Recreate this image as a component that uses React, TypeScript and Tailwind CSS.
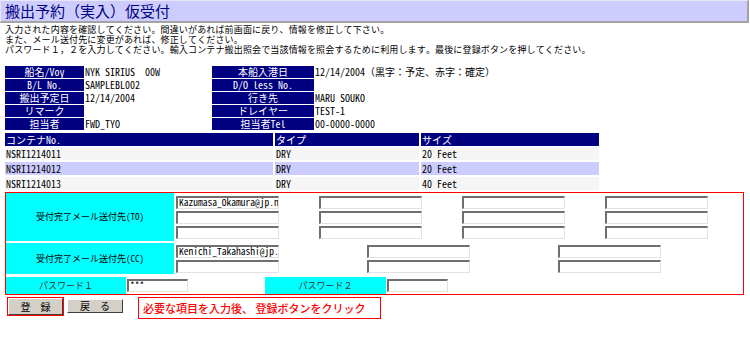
import { Fragment } from 'react';

const mono = "font-['Noto_Sans_Mono_CJK_JP','Noto_Sans_CJK_JP',monospace]";

const infoRows: [string, string, string, string][] = [
  ['船名/Voy', 'NYK SIRIUS  00W', '本船入港日', '12/14/2004（黒字：予定、赤字：確定）'],
  ['B/L No.', 'SAMPLEBL002', 'D/O less No.', ''],
  ['搬出予定日', '12/14/2004', '行き先', 'MARU SOUKO'],
  ['リマーク', '', 'ドレイヤー', 'TEST-1'],
  ['担当者', 'FWD_TYO', '担当者Tel', '00-0000-0000'],
];

const containers = [
  { no: 'NSRI1214011', type: 'DRY', size: '20 Feet' },
  { no: 'NSRI1214012', type: 'DRY', size: '20 Feet' },
  { no: 'NSRI1214013', type: 'DRY', size: '40 Feet' },
];

// メール欄（TO: 4列x3段, CC: 3列x2段）
const toCols = [['Kazumasa_Okamura@jp.n', '', ''], ['', '', ''], ['', '', ''], ['', '', '']];
const ccCols = [['Kenichi_Takahashi@jp.', ''], ['', ''], ['', '']];

function Field({ value, w = 'w-[103px]' }: { value: string; w?: string }) {
  return (
    <div
      className={`${w} h-[13px] bg-white pl-[1px] text-[9.5px] leading-[9px] text-black overflow-hidden whitespace-nowrap border-t-2 border-l-2 border-b border-r border-t-[#6f6f6f] border-l-[#6f6f6f] border-b-[#e2e2e2] border-r-[#e2e2e2] ${mono}`}
    >
      {value}
    </div>
  );
}

const btn =
  'bg-[#d4d0c8] border border-t-white border-l-white border-b-[#404040] border-r-[#404040] flex items-center justify-center leading-none';

export default function App() {
  return (
    <div className={`w-[750px] h-[342px] bg-white text-black overflow-hidden ${mono}`}>
      {/* Title bar */}
      <div className="w-[749px] h-[23px] bg-[#ccccff] border-t border-l border-t-[#e6e6f5] border-l-[#e6e6f5] border-b-2 border-r-2 border-b-[#a4a4a4] border-r-[#a4a4a4] pl-[4px] flex items-center text-[15px] text-[#000080] font-['Noto_Sans_CJK_JP',sans-serif]">
        搬出予約（実入）仮受付
      </div>

      {/* Notes */}
      <div className="pl-[5px] pt-[2px] text-[9px] leading-[10px] tracking-[0.15px]">
        <p>入力された内容を確認してください。間違いがあれば前画面に戻り、情報を修正して下さい。</p>
        <p>また、メール送付先に変更があれば、修正してください。</p>
        <p>パスワード１，２を入力してください。輸入コンテナ搬出照会で当該情報を照会するために利用します。最後に登録ボタンを押してください。</p>
      </div>

      {/* Booking info */}
      <div className="mt-[11px] ml-[5px] grid grid-cols-[79px_126px_102px_1fr] gap-[1px] text-[10px] leading-[12px]">
        {infoRows.map((r) => (
          <Fragment key={r[0]}>
            <div className="h-[12px] bg-[#000080] text-white text-center">{r[0]}</div>
            <div className="h-[12px] whitespace-pre">{r[1]}</div>
            <div className="h-[12px] bg-[#000080] text-white text-center">{r[2]}</div>
            <div className="h-[12px] whitespace-pre">{r[3]}</div>
          </Fragment>
        ))}
      </div>

      {/* Containers */}
      <div className="mt-[3px] ml-[5px] w-[592px] text-[10px] leading-[13px]">
        <div className="grid grid-cols-[268px_144px_178px] gap-x-[2px] h-[13px] text-white">
          <div className="bg-[#000080] pl-[1px]">コンテナNo.</div>
          <div className="bg-[#000080] pl-[1px]">タイプ</div>
          <div className="bg-[#000080] pl-[1px]">サイズ</div>
        </div>
        <div className="mt-[1px] flex flex-col gap-[2px]">
          {containers.map((c, i) => {
            const bg = i === 1 ? 'bg-[#ccccff]' : 'bg-[#f5f5f5]';
            return (
              <div key={c.no} className="grid grid-cols-[268px_144px_178px] gap-x-[2px] h-[13px]">
                <div className={`${bg} pl-[1px]`}>{c.no}</div>
                <div className={`${bg} pl-[1px]`}>{c.type}</div>
                <div className={`${bg} pl-[1px]`}>{c.size}</div>
              </div>
            );
          })}
        </div>
      </div>

      {/* Mail / password form */}
      <div className="mt-[2px] ml-[5px] w-[739px] border border-[#ff0000] text-[9px] leading-[10px]">
        <div className="flex h-[48px]">
          <div className="w-[168px] bg-[#00ffff] flex items-center justify-center">受付完了メール送付先(TO)</div>
          <div className="pl-[2px] pt-[3px] flex gap-[40px]">
            {toCols.map((col, i) => (
              <div key={i} className="flex flex-col gap-[2px]">
                {col.map((v, j) => (
                  <Field key={j} value={v} />
                ))}
              </div>
            ))}
          </div>
        </div>
        <div className="mt-[2px] flex h-[31px]">
          <div className="w-[168px] bg-[#00ffff] flex items-center justify-center">受付完了メール送付先(CC)</div>
          <div className="pl-[2px] pt-[2px] flex gap-[88px]">
            {ccCols.map((col, i) => (
              <div key={i} className="flex flex-col gap-[2px]">
                {col.map((v, j) => (
                  <Field key={j} value={v} />
                ))}
              </div>
            ))}
          </div>
        </div>
        <div className="mt-[3px] flex h-[17px] items-start">
          <div className="w-[120px] h-[17px] bg-[#00ffff] flex items-center justify-center text-[#333]">パスワード１</div>
          <div className="ml-[1px] pt-[2px]">
            <Field value="***" w="w-[61px]" />
          </div>
          <div className="ml-[77px] w-[121px] h-[17px] bg-[#00ffff] flex items-center justify-center text-[#333]">パスワード２</div>
          <div className="ml-[1px] pt-[2px]">
            <Field value="" w="w-[61px]" />
          </div>
        </div>
      </div>

      {/* Buttons */}
      <div className="mt-[2px] ml-[7px] flex items-start text-[10px]">
        <div className="w-[57px] h-[19px] border border-[#ff0000]">
          <button className={`w-[55px] h-[17px] ${btn}`}>登　録</button>
        </div>
        <button className={`ml-[3px] mt-[2px] w-[56px] h-[14px] ${btn}`}>戻　る</button>
        <div className="ml-[15px] w-[243px] h-[22px] border border-[#ff0000] pl-[4px] flex items-center text-[11px] text-[#ff0000] font-['Noto_Sans_CJK_JP',sans-serif] font-medium whitespace-pre">
          必要な項目を入力後、 登録ボタンをクリック
        </div>
      </div>
    </div>
  );
}
